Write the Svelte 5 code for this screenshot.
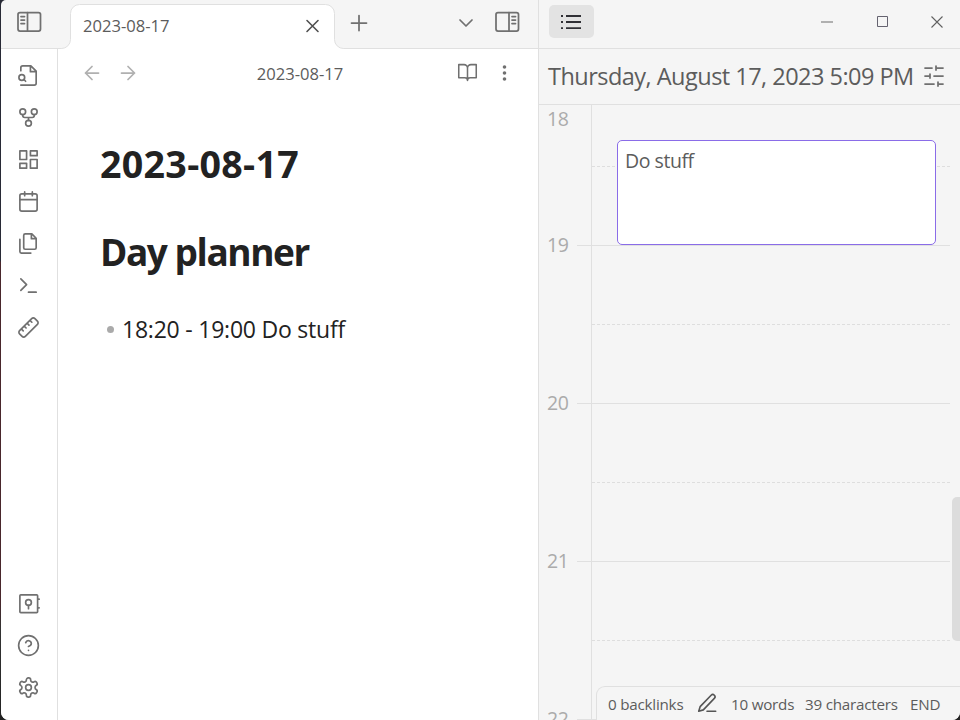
<script>
  const ribbonTop = [
    '<path d="M4 22h14a2 2 0 0 0 2-2V7.500L14.500 2H6a2 2 0 0 0-2 2v3M14 2v6h6"/><circle cx="5" cy="14" r="3"/><path d="m9 18-1.800-1.800"/>',
    '<circle cx="12" cy="18" r="3"/><circle cx="6" cy="6" r="3"/><circle cx="18" cy="6" r="3"/><path d="M18 9v1a2 2 0 0 1-2 2H8a2 2 0 0 1-2-2V9M12 12v3"/>',
    '<rect x="3" y="3" width="7" height="9"/><rect x="14" y="3" width="7" height="5"/><rect x="14" y="12" width="7" height="9"/><rect x="3" y="16" width="7" height="5"/>',
    '<rect x="3" y="4" width="18" height="18" rx="2"/><path d="M16 2v4M8 2v4M3 10h18"/>',
    '<path d="M15.500 2H8.600C7.700 2 7 2.700 7 3.600v12.800C7 17.300 7.700 18 8.600 18h9.800c.9 0 1.600-.7 1.600-1.600V6.500zM3 7.600v12.800C3 21.300 3.700 22 4.600 22h9.800M15 2v5h5"/>',
    '<path d="m4 17 6-6-6-6M12 19h8"/>',
    '<g transform="matrix(-1 0 0 1 24 0)"><path d="M21.300 15.300a2.400 2.400 0 0 1 0 3.400l-2.600 2.600a2.400 2.400 0 0 1-3.400 0L2.700 8.700a2.400 2.400 0 0 1 0-3.400l2.600-2.600a2.400 2.400 0 0 1 3.400 0zM14.500 12.500l2-2M11.500 9.500l2-2M8.500 6.500l2-2M17.500 15.500l2-2"/></g>'
  ];
  const ribbonBottom = [
    '<rect x="3" y="3" width="18.500" height="18.500" rx="1"/><circle cx="12" cy="11" r="3"/><path d="M12 14v3.500M22.500 7.500h.6M22.500 16.500h.6"/>',
    '<circle cx="12" cy="12" r="10.300"/><path d="M9.090 9a3 3 0 0 1 5.830 1c0 2-3 3-3 3M12 17h.01"/>',
    '<path d="M12.220 2h-.44a2 2 0 0 0-2 2v.18a2 2 0 0 1-1 1.730l-.43.25a2 2 0 0 1-2 0l-.15-.08a2 2 0 0 0-2.730.73l-.22.38a2 2 0 0 0 .73 2.730l.15.1a2 2 0 0 1 1 1.720v.51a2 2 0 0 1-1 1.740l-.15.09a2 2 0 0 0-.73 2.730l.22.38a2 2 0 0 0 2.730.73l.15-.08a2 2 0 0 1 2 0l.43.25a2 2 0 0 1 1 1.730V20a2 2 0 0 0 2 2h.44a2 2 0 0 0 2-2v-.18a2 2 0 0 1 1-1.730l.43-.25a2 2 0 0 1 2 0l.15.08a2 2 0 0 0 2.730-.73l.22-.39a2 2 0 0 0-.73-2.730l-.15-.08a2 2 0 0 1-1-1.740v-.5a2 2 0 0 1 1-1.740l.15-.09a2 2 0 0 0 .73-2.730l-.22-.38a2 2 0 0 0-2.730-.73l-.15.08a2 2 0 0 1-2 0l-.43-.25a2 2 0 0 1-1-1.730V4a2 2 0 0 0-2-2z"/><circle cx="12" cy="12" r="3"/>'
  ];
  const hours = [19, 20, 21, 22];
</script>

{#snippet ribbonIcon(shape)}
  <div class="action"><svg class="icon" width="23" height="23" viewBox="0 0 24 24">{@html shape}</svg></div>
{/snippet}

<div class="desktop">
  <div class="window">
    <section class="main">
      <header class="tabs">
        <svg class="icon toggle" width="26" height="22" viewBox="0 0 26 22"><rect x="2" y="1.500" width="22.500" height="18.500" rx="2"/><path d="M11.500 1.500V20M5 5.500h3.500M5 9h3.500M5 12.500h3.500" /></svg>
        <div class="tab">
          <svg class="shape" width="283" height="45" viewBox="0 0 283 45"><path fill="#fff" d="M.5 45v-.5a9 9 0 0 0 9-9v-26a9 9 0 0 1 9-9h246a9 9 0 0 1 9 9v26a9 9 0 0 0 9 9v.5z"/><path fill="none" stroke="#e0e0e0" d="M.5 44.500a9 9 0 0 0 9-9v-26a9 9 0 0 1 9-9h246a9 9 0 0 1 9 9v26a9 9 0 0 0 9 9"/></svg>
          <span class="name">2023-08-17</span>
          <svg class="icon dark" width="15" height="15" viewBox="0 0 15 15"><path d="m2 1.500 11 11M13 1.500l-11 11"/></svg>
        </div>
        <svg class="icon plus" width="18" height="18" viewBox="0 0 18 18"><path d="M9 1.500v15M1.500 9h15"/></svg>
        <svg class="icon chevron" width="16" height="10" viewBox="0 0 16 10"><path d="m2 2 6 6 6-6"/></svg>
        <svg class="icon right" width="26" height="22" viewBox="0 0 26 22"><rect x="2" y="1.500" width="22.500" height="18.500" rx="2"/><path d="M15 1.500V20M18 5.500h3.500M18 9h3.500M18 12.500h3.500"/></svg>
      </header>
      <div class="body">
        <nav class="ribbon">
          {#each ribbonTop as shape}{@render ribbonIcon(shape)}{/each}
          <div class="grow"></div>
          {#each ribbonBottom as shape}{@render ribbonIcon(shape)}{/each}
        </nav>
        <article>
          <div class="viewbar">
            <div class="history">
              <svg class="icon" width="16" height="16" viewBox="0 0 16 16"><path d="M14.500 8h-13M8 1.500 1.500 8 8 14.500"/></svg>
              <svg class="icon" width="16" height="16" viewBox="0 0 16 16"><path d="M1.500 8h13M8 1.500 14.500 8 8 14.500"/></svg>
            </div>
            <span class="name">2023-08-17</span>
            <div class="tools">
              <svg class="icon" width="21" height="21" viewBox="0 0 24 24"><path d="M2 3h6a4 4 0 0 1 4 4v14a3 3 0 0 0-3-3H2zM22 3h-6a4 4 0 0 0-4 4v14a3 3 0 0 1 3-3h7z"/></svg>
              <svg width="5" height="18" viewBox="0 0 5 18" fill="#707070"><circle cx="2.500" cy="3" r="1.800"/><circle cx="2.500" cy="9" r="1.800"/><circle cx="2.500" cy="15" r="1.800"/></svg>
            </div>
          </div>
          <div class="note">
            <h1>2023-08-17</h1>
            <h2>Day planner</h2>
            <div class="item"><i></i><span>18:20 - 19:00 Do stuff</span></div>
          </div>
        </article>
      </div>
    </section>

    <aside>
      <div class="sidebar-head">
        <div class="list-tab">
          <svg width="22" height="18" viewBox="0 0 22 18" stroke="#303035" stroke-width="1.800"><path d="M5 3h15M5 9h15M5 15.200h15M0 3h2M0 9h2M0 15.200h2"/></svg>
        </div>
        <div class="controls">
          <svg width="12" height="12" viewBox="0 0 12 12" stroke="#999" stroke-width="1.500"><path d="M0 6h12"/></svg>
          <svg width="12" height="12" viewBox="0 0 12 12" stroke="#656370" fill="none"><path d="M1.500.500h10v10h-10z"/></svg>
          <svg width="12" height="12" viewBox="0 0 12 12" stroke="#606060" stroke-width="1.100"><path d="m.5.500 11 11M11.500.500l-11 11"/></svg>
        </div>
      </div>
      <div class="date-row">
        <span>Thursday, August 17, 2023 5:09 PM</span>
        <svg class="icon" width="24" height="24" viewBox="0 0 24 24"><path d="M21 4h-7M10 4H3M21 12h-9M8 12H3M21 20h-5M12 20H3M14 2v4M8 10v4M16 18v4"/></svg>
      </div>
      <div class="timeline">
        <div class="ruler">
          <div class="hour first"><span>18</span></div>
          {#each hours as hour}<div class="hour"><span>{hour}</span><b></b></div>{/each}
        </div>
        <div class="grid">
          <div class="slot partial"><i></i></div>
          {#each hours as hour}<div class="slot"><i></i></div>{/each}
        </div>
        <div class="event">Do stuff</div>
        <div class="thumb"></div>
      </div>
    </aside>

    <footer>
      <span class="s1">0 backlinks</span>
      <svg class="icon" width="22" height="22" viewBox="0 0 24 24"><path d="M12 21h9.500M16.500 3.500a2.120 2.120 0 0 1 3.500 3.500L8 19.500l-5 1.500 1.500-5z"/></svg>
      <span class="s2">10 words</span>
      <span class="s3">39 characters</span>
      <span class="s4">END</span>
    </footer>
  </div>
</div>

<style>
  * { box-sizing: border-box; }
  .desktop {
    width: 960px; height: 720px; padding-left: 1px; overflow: hidden;
    background: linear-gradient(#282a36 0 261px, #49272c 262px 600px, #333 630px, #222);
    font-family: "Open Sans", "Noto Sans", sans-serif; color: #5c5c5c;
  }
  .window { position: relative; display: flex; width: 959px; height: 720px; overflow: hidden; border-radius: 5px 0 8px 8px; background: #f5f5f5; }
  svg { display: block; flex: none; }
  .icon { fill: none; stroke: #707070; stroke-width: 1.75; stroke-linecap: round; stroke-linejoin: round; }
  .main { width: 537px; display: flex; flex-direction: column; }
  .tabs { height: 49px; display: flex; align-items: flex-start; border-bottom: 1px solid #e0e0e0; }
  .toggle { margin: 11px 0 0 15px; }
  .tab { position: relative; z-index: 1; display: flex; align-items: center; width: 265px; height: 45px; margin: 4px 0 0 28px; padding: 0 15px 0 13px; }
  .tab .name { flex: 1; margin-top: -2px; }
  .shape { position: absolute; left: -9px; top: 0; z-index: -1; }
  .name { font-size: 16.6px; line-height: 24px; }
  .dark { stroke: #505050; stroke-width: 1.6; }
  .plus { margin: 14px 0 0 15px; }
  .chevron { margin: 18px 0 0 90px; }
  .right { margin: 11px 0 0 20px; }
  .body { flex: 1; display: flex; background: #fff; }
  .ribbon { width: 57px; display: flex; flex-direction: column; padding: 5px 0 12px; border-right: 1px solid #e0e0e0; }
  .action { height: 42px; display: flex; align-items: center; justify-content: center; padding-right: 1px; }
  .grow { flex: 1; }
  article { flex: 1; }
  .viewbar { height: 47px; display: grid; grid-template-columns: 1fr auto 1fr; align-items: center; padding: 0 31px 0 27px; }
  .history { display: flex; gap: 20px; opacity: .55; margin-left: -1px; }
  .viewbar .name { position: relative; left: 4px; padding-top: 3px; }
  .tools { display: flex; justify-content: flex-end; align-items: center; gap: 24px; }
  .note { padding: 40px 0 0 42px; color: #222; }
  h1, h2 { margin: 0; line-height: 56px; font-weight: 700; white-space: nowrap; }
  h1 { font-size: 37.6px; letter-spacing: .3px; }
  h2 { margin-top: 32px; font-size: 37px; letter-spacing: -1.45px; }
  .item { display: flex; align-items: center; margin-top: 29px; padding-left: 7px; font-size: 23px; line-height: 40px; letter-spacing: -.22px; white-space: nowrap; }
  .item i { width: 7px; height: 7px; border-radius: 50%; margin-right: 8px; background: #aaa; }
  aside { flex: 1; min-width: 0; display: flex; flex-direction: column; border-left: 1px solid #e0e0e0; }
  .sidebar-head { height: 49px; display: flex; justify-content: space-between; border-bottom: 1px solid #e0e0e0; padding: 5px 17px 0 10px; }
  .list-tab { width: 45px; height: 33px; display: grid; place-items: center; border-radius: 5px; background: #e3e3e3; }
  .controls { display: flex; gap: 43px; padding-top: 11px; }
  .date-row { height: 56px; display: flex; align-items: center; justify-content: space-between; border-bottom: 1px solid #e0e0e0; padding: 0 14px 2px 9px; white-space: nowrap; font-size: 23.5px; letter-spacing: -.52px; }
  .timeline { flex: 1; min-height: 0; position: relative; display: flex; overflow: hidden; }
  .ruler { width: 53px; flex: none; border-right: 1px solid #e0e0e0; padding-left: 8px; color: #ababab; font-size: 19.5px; }
  .hour { height: 28px; margin-bottom: 130px; display: flex; align-items: center; justify-content: space-between; letter-spacing: -.3px; }
  .hour span { margin-top: -2px; }
  .hour.first { margin-bottom: 98px; }
  .hour b { width: 14px; height: 1px; background: #e0e0e0; }
  .grid { width: 358px; flex: none; }
  .slot { height: 158px; border-top: 1px solid #e0e0e0; padding-top: 78px; }
  .slot.partial { height: 140px; border: 0; padding-top: 61px; }
  .slot i { display: block; height: 1px; background: repeating-linear-gradient(90deg, #dedede 0 3px, transparent 3px 5px); }
  .event { position: absolute; left: 78px; top: 35px; width: 319px; height: 105px; border: 1px solid #8a6ce8; border-radius: 5px; background: #fff; padding: 6px 7px; font-size: 19.5px; line-height: 28px; letter-spacing: -.45px; }
  .thumb { position: absolute; left: 413px; top: 392px; width: 12px; height: 144px; border-radius: 5px; background: #dcdcdc; }
  footer { position: absolute; left: 595px; right: 0; bottom: 0; height: 34px; display: flex; align-items: center; border: solid #e0e0e0; border-width: 1px 0 0 1px; border-top-left-radius: 9px; background: #f5f5f5; padding: 1px 0 0 11px; font-size: 15.2px; white-space: nowrap; letter-spacing: -.22px; }
  footer .icon { margin: -2px 0 0 11px; stroke: #555; }
  .s1 { width: 77px; }
  .s2 { margin-left: 13px; width: 74px; }
  .s3 { width: 105px; }
</style>
